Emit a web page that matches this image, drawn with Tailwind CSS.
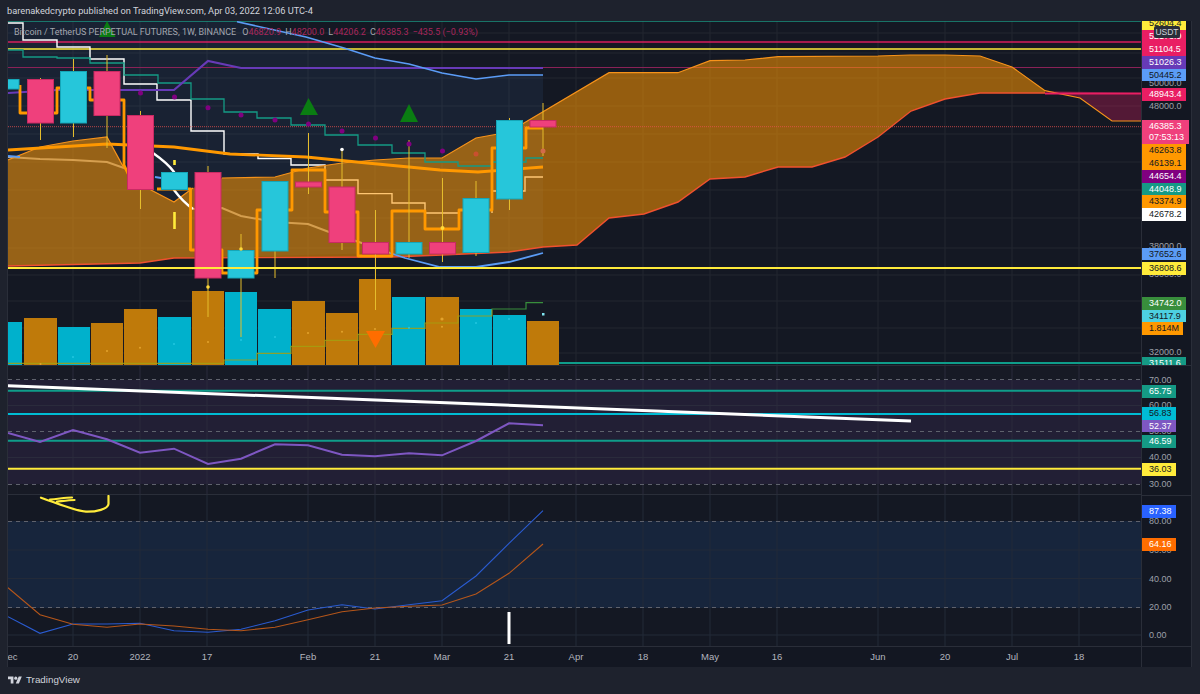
<!DOCTYPE html>
<html lang="en">
<head>
    <meta charset="UTF-8">
    <title>BTCUSDT | TradingView</title>
    <script src="https://cdn.jsdelivr.net/npm/@tailwindcss/browser@4"></script>
</head>
<body class="w-[1200px] h-[694px] bg-[#1e222d] overflow-hidden flex flex-col font-['Liberation_Sans',Arial,sans-serif]">
    <!-- Published by line -->
    <div class="h-[21px] pl-[7px] flex items-center text-[#d1d4dc] text-[9.25px] shrink-0 font-['Roboto',sans-serif]">barenakedcrypto published on TradingView.com, Apr 03, 2022 12:06 UTC-4</div>

    <div class="flex ml-[7px] w-[1185px] h-[646px] shrink-0 bg-[#131722]">
        <!-- Panes -->
        <div class="w-[1134px] flex flex-col border-l border-[#2a2e39]">
            <!-- Price pane -->
            <div class="relative h-[344px] overflow-hidden">
                <svg class="block" width="1133" height="344" viewBox="8 21 1133 344" fill="none">
                    <rect x="8" y="21" width="1133" height="344" fill="#141823"/>
                    <path d="M73 21V365M140 21V365M207 21V365M308 21V365M375 21V365M442 21V365M509 21V365M576 21V365M643 21V365M710 21V365M777 21V365M878 21V365M945 21V365M1012 21V365M1079 21V365M8 33H1141M8 53H1141M8 78H1141M8 106H1141M8 134H1141M8 162H1141M8 190H1141M8 218H1141M8 248H1141M8 275H1141M8 301H1141M8 328H1141M8 353H1141" stroke="#222631"/>
                    <!-- band between the blue lines -->
                    <polygon points="8,21 237,21 306,37 344,48 375,58 409,64 442,73 476,79 509,75 543,75 543,253 509,262 476,267 440,267 405,258 390,253 174,258 140,263 8,266" fill="#5b9cf6" fill-opacity="0.08"/>

                    <!-- volume -->
                    <g fill="#bf7a0a">
                        <rect x="24" y="318" width="33" height="47"/><rect x="91" y="323" width="32" height="42"/><rect x="124" y="309" width="33" height="56"/>
                        <rect x="192" y="291" width="32" height="74"/><rect x="292" y="301" width="33" height="64"/><rect x="326" y="313" width="32" height="52"/>
                        <rect x="359" y="279" width="32" height="86"/><rect x="426" y="297" width="33" height="68"/><rect x="527" y="321" width="32" height="44"/>
                    </g>
                    <g fill="#00b1cc">
                        <rect x="8" y="322" width="14" height="43"/><rect x="58" y="327" width="32" height="38"/><rect x="158" y="317" width="33" height="48"/>
                        <rect x="225" y="292" width="32" height="73"/><rect x="258" y="309" width="33" height="56"/><rect x="392" y="297" width="33" height="68"/>
                        <rect x="460" y="309" width="32" height="56"/><rect x="493" y="315" width="33" height="50"/>
                    </g>
                    <path d="M8 363.3H224V360H257V353.3H291V346.3H325V340.3H358V334.3H392V328.3H425V323H458V316H492V309.3" stroke="#a3a012" stroke-opacity="0.85" stroke-width="1.2"/>
                    <path d="M492 309.3V309H526V302.7H543" stroke="#388e3c" stroke-width="1.2"/>
                    <path d="M559 363H1141" stroke="#0f9d8a" stroke-width="2"/>
                    <g fill="#e3a32c">
                        <circle cx="40.5" cy="364" r="1"/><circle cx="107" cy="351" r="1"/><circle cx="140" cy="347.7" r="1"/><circle cx="208" cy="342" r="1"/><circle cx="308" cy="333" r="1"/><circle cx="342" cy="331.7" r="1"/><circle cx="375" cy="329" r="1"/><circle cx="442" cy="319" r="1.6"/><circle cx="442" cy="326.7" r="1"/>
                    </g>
                    <g fill="#22c7e0">
                        <circle cx="73" cy="357" r="1"/><circle cx="174" cy="344" r="1"/><circle cx="241" cy="340" r="1"/><circle cx="275" cy="337" r="1"/><circle cx="409" cy="327.7" r="1"/><circle cx="476" cy="323" r="1"/><circle cx="509" cy="319" r="1"/>
                    </g>
                    <rect x="542" y="313" width="2.5" height="2.5" fill="#7fe3f0"/>
                    <rect x="306.5" y="365" width="3" height="3" fill="#fff"/>

                    <!-- horizontal levels -->
                    <path d="M8 21.5H1141" stroke="#1a9a85" stroke-opacity="0.7"/>
                    <path d="M8 42H1141" stroke="#e91e63" stroke-opacity="0.9" stroke-width="1.3"/>
                    <path d="M8 49H1141" stroke="#ffeb3b" stroke-width="1.5"/>
                    <path d="M8 67.5H1141" stroke="#8a2257" stroke-width="1"/>

                    <!-- step lines under the cloud -->
                    <path d="M8 23H23V40H57V47H90V59H124V84H157V100H191V131H224V154H258V158.5H291V165H325V180H358V193.6H392V203H425V213H459M492 213V191H525V177H543" stroke="#fff" stroke-width="1.4"/>
                    <path d="M8 157L40 159L73 160L107 162L124 168" stroke="#fff" stroke-width="2" stroke-opacity="0.6"/>
                    <path d="M193 209L222 208L241 216L275 222L308 224L329 232L356 241L390 253" stroke="#fff" stroke-width="2" stroke-opacity="0.6"/>

                    <!-- ichimoku cloud -->
                    <polygon points="8,160 40,147 73,141 107,137 124,168 151,190 174,202 193,188 222,178 275,177 308,168 342,163 375,160 409,158 442,158 476,138 509,132 524,123 609,72.7 678,72.7 710,60.7 745,60 778,56.7 878,56 910,55 945,55 980,56 1012,67 1045,90.7 1045,93 980,93 945,99 911,111 878,137 845,157 812,167 778,167 745,177 710,179 678,202 644,214 609,218 577,245 543,247 509,252 442,255 392,257 174,258 140,263 8,266" fill="#ff9800" fill-opacity="0.55"/>
                    <polygon points="1045,91 1080,98 1112,121 1141,121 1141,93" fill="#e91e63" fill-opacity="0.3"/>
                    <path d="M8 160L40 147L73 141L107 137L124 168L151 190L174 202L193 188M222 178L275 177L308 168L342 163L375 160L409 158L442 158L476 138L509 132L524 123L609 72.7L678 72.7L710 60.7L745 60L778 56.7L878 56L910 55L945 55L980 56L1012 67L1045 90.7L1080 98L1112 121L1141 121" stroke="#f7931a" stroke-width="1.2"/>
                    <path d="M8 266L140 263L174 258L392 257L442 255L509 252L543 247L577 245L609 218L644 214L678 202L710 179L745 177L778 167L812 167L845 157L878 137L911 111L945 99L980 93L1045 93" stroke="#f0512f" stroke-width="1.4"/>
                    <path d="M1045 93.5H1141" stroke="#e91e63" stroke-width="1.8"/>

                    <!-- price line -->
                    <path d="M8 126.7H1141" stroke="#ef5350" stroke-opacity="0.75" stroke-dasharray="1 1"/>

                    <!-- teal, purple and blue lines -->
                    <path d="M8 50H23V57H57V58H90V63H124V75H158V83H191V99H224V112H257V118H291V125H325V135H358V145H392V153H425V162H458V166H492V162H526V158H543" stroke="#159a85" stroke-width="1.3"/>
                    <path d="M8 93L57 90L174 90L208 61L241 68L543 68" stroke="#673ab7" stroke-width="2.2"/>
                    <path d="M237 21.7L306 37L344 48L375 58L409 64L442 73L476 79L509 75L543 75" stroke="#5b9cf6" stroke-width="1.6"/>
                    <path d="M8 156L20 157M155 177L161 178M390 253L405 258L440 267L476 267L509 262L543 253" stroke="#5b9cf6" stroke-width="1.8"/>
                    <path d="M153 153C163 160 169 165 174 172V190C180 198 186 204 193 209" stroke="#fff" stroke-width="2.4"/>

                    <!-- thick orange lines -->
                    <path d="M8 150L107 144L174 147L230 154L306 157L367 163L440 170L478 172L543 167" stroke="#ff9800" stroke-width="2.8"/>
                    <path d="M20 85V113H57V88H90V100H124V165L130 178M157 189H190.5V250H222V273H257V210H292V170H325V212H358V256H392V211H425V229H459V210H492V148H526V128H543" stroke="#ff9800" stroke-width="2.8" stroke-linejoin="round"/>

                    <!-- wicks -->
                    <path d="M40.5 78V140M73.5 59V137M107 55V148M140.5 111V209M208 166V317M241 234V337M275 181V278M308.5 133V194M342 149V250M375.5 210V310M409 140V258M442.5 178V262M476 181V256M509.5 118V210M543 103V156" stroke="#e5bd2c" stroke-width="1"/>
                    <path d="M174.5 160V165M174.5 212V229" stroke="#ffeb3b" stroke-width="2.6"/>
                    <!-- candles -->
                    <g fill="#ef407c" stroke="#c92a63">
                        <rect x="27.5" y="79.5" width="26" height="43.5"/><rect x="94" y="71.5" width="26" height="44"/><rect x="127.5" y="115.5" width="26" height="74"/>
                        <rect x="195" y="172.5" width="26" height="105.5"/><rect x="295.5" y="182" width="26" height="5"/><rect x="329" y="187" width="26" height="55.5"/>
                        <rect x="362.5" y="242.5" width="26" height="11.5"/><rect x="429.5" y="242.5" width="26" height="11.5"/><rect x="530" y="120.5" width="26" height="6.5"/>
                    </g>
                    <g fill="#26c6da" stroke="#15a6b8">
                        <rect x="7" y="79.5" width="12" height="9.5"/><rect x="60.5" y="71.5" width="26" height="51.5"/><rect x="161.5" y="172.5" width="26" height="17"/>
                        <rect x="228" y="250.5" width="26" height="27.5"/><rect x="262" y="181.5" width="26" height="69.5"/><rect x="396" y="242.5" width="26" height="11.5"/>
                        <rect x="463" y="198.5" width="26" height="54"/><rect x="496.5" y="120.5" width="26" height="78.5"/>
                    </g>

                    <!-- dots and markers -->
                    <g fill="#800080">
                        <circle cx="140.5" cy="93" r="2.5"/><circle cx="174.5" cy="97" r="2.5"/><circle cx="208" cy="107.7" r="2.5"/><circle cx="241" cy="115" r="2.5"/><circle cx="275" cy="120" r="2.5"/><circle cx="308.5" cy="124" r="2.5"/><circle cx="342" cy="131" r="2.5"/><circle cx="375.5" cy="138" r="2.5"/><circle cx="409" cy="144" r="2.5"/><circle cx="442.5" cy="151" r="2.5"/>
                    </g>
                    <circle cx="476" cy="154" r="2.5" fill="#c9502f"/>
                    <circle cx="543" cy="151" r="2.5" fill="#d36a4a"/>
                    <circle cx="342" cy="149.5" r="1.8" fill="#fff"/>
                    <circle cx="208" cy="287" r="1.8" fill="#ffd93b"/>
                    <circle cx="241" cy="249" r="1.8" fill="#ffd93b"/>
                    <circle cx="442.5" cy="228" r="2" fill="#ffd93b"/>
                    <g fill="#0a7d12">
                        <polygon points="107,21 115.5,37 99,37"/><polygon points="308.5,98 318,115 300,115"/><polygon points="409,104 418,122 400,122"/>
                    </g>
                    <polygon points="366,331 385,331 375.5,348" fill="#ff6d00"/>

                    <!-- yellow support -->
                    <path d="M8 268H1141" stroke="#ffeb3b" stroke-width="2"/>
                </svg>
                <!-- Legend -->
                <div class="absolute left-[6px] top-[6px] flex gap-[6px] text-[9px] whitespace-nowrap leading-[11px] text-[#a3a6af] font-['Roboto',sans-serif]">
                    <span>Bitcoin / TetherUS PERPETUAL FUTURES, 1W, BINANCE</span>
                    <span class="flex gap-[4px] text-[#a8265c]">
                        <span><span class="text-[#a3a6af]">O</span>46820.9</span>
                        <span><span class="text-[#a3a6af]">H</span>48200.0</span>
                        <span><span class="text-[#a3a6af]">L</span>44206.2</span>
                        <span><span class="text-[#a3a6af]">C</span>46385.3</span>
                        <span>−435.5 (−0.93%)</span>
                    </span>
                </div>
            </div>

            <!-- RSI pane -->
            <div class="h-[130px]">
                <svg class="block" width="1133" height="130" viewBox="8 365 1133 130" fill="none">
                    <rect x="8" y="365" width="1133" height="130" fill="#171a25"/>
                    <rect x="8" y="380" width="1133" height="104" fill="#221f35"/>
                    <path d="M73 365V495M140 365V495M207 365V495M308 365V495M375 365V495M442 365V495M509 365V495M576 365V495M643 365V495M710 365V495M777 365V495M878 365V495M945 365V495M1012 365V495M1079 365V495M8 405.5H1141M8 457.5H1141" stroke="#2a2b3c"/>
                    <path d="M8 365.5H1141M8 494.5H1141" stroke="#2a2e39"/>
                    <path d="M8 379.5H1141M8 431.5H1141M8 484.5H1141" stroke="#5f626d" stroke-dasharray="4 4"/>
                    <path d="M8 390.7H1141M8 440.7H1141" stroke="#0f9d8a" stroke-width="2"/>
                    <path d="M8 414H1141" stroke="#00bcd4" stroke-width="2"/>
                    <path d="M8 468.7H1141" stroke="#ffeb3b" stroke-width="2"/>
                    <path d="M8 385.7L911 421" stroke="#fff" stroke-width="3"/>
                    <polyline points="8,433 40,442 73,430 107,439.3 140,452.7 174,448.7 208,464 241,458.7 275,444.3 308,445.3 342,454.7 375,456.3 409,453.3 442,455.3 476,441 509,423.3 543,425.3" stroke="#7e57c2" stroke-width="2"/>
                </svg>
            </div>

            <!-- Stochastic pane -->
            <div class="h-[151px]">
                <svg class="block" width="1133" height="151" viewBox="8 495 1133 151" fill="none">
                    <rect x="8" y="495" width="1133" height="151" fill="#141823"/>
                    <rect x="8" y="521" width="1133" height="87" fill="#17253c"/>
                    <path d="M73 495V646M140 495V646M207 495V646M308 495V646M375 495V646M442 495V646M509 495V646M576 495V646M643 495V646M710 495V646M777 495V646M878 495V646M945 495V646M1012 495V646M1079 495V646M8 550H1141M8 578.5H1141M8 635H1141" stroke="#232a38"/>
                    <path d="M8 521.5H1141M8 607.5H1141" stroke="#5f626d" stroke-dasharray="4 4"/>
                    <!-- hand drawn arrow -->
                    <path d="M108.5 496V504C108 509 96 512 86 511.7C76 511 62 505 41 497.7M50 499.5C58 499 65 497.5 72 497.5M57 501.7C63 501 69 500 74.5 500" stroke="#ffeb3b" stroke-width="2.2" stroke-linecap="round" stroke-linejoin="round"/>
                    <polyline points="8,616.7 40,633.3 73,624 107,624 140,623.3 174,630.7 208,632.3 241,629.3 275,620.7 308,610 342,604.7 375,609 409,604.7 442,600.7 476,576 509,543.3 543,510.7" stroke="#2a5bd0" stroke-width="1.1"/>
                    <polyline points="8,587.7 40,614.7 73,624.3 107,627.3 140,624 174,626 208,629.3 241,630.7 275,627.3 308,619.7 342,611.7 375,608 409,606.3 442,605 476,594 509,573.3 543,544" stroke="#b5561a" stroke-width="1.1"/>
                    <rect x="507.5" y="612" width="3" height="32" fill="#fff"/>
                </svg>
            </div>

            <!-- Time axis -->
            <div class="relative h-[21px] border-t border-[#2a2e39] text-[9.5px] text-[#b2b5be] leading-[20px] overflow-hidden">
                <span class="absolute left-[1px] -translate-x-1/2">Dec</span>
                <span class="absolute left-[65px] -translate-x-1/2">20</span>
                <span class="absolute left-[132px] -translate-x-1/2">2022</span>
                <span class="absolute left-[199px] -translate-x-1/2">17</span>
                <span class="absolute left-[300px] -translate-x-1/2">Feb</span>
                <span class="absolute left-[367px] -translate-x-1/2">21</span>
                <span class="absolute left-[434px] -translate-x-1/2">Mar</span>
                <span class="absolute left-[501px] -translate-x-1/2">21</span>
                <span class="absolute left-[568px] -translate-x-1/2">Apr</span>
                <span class="absolute left-[635px] -translate-x-1/2">18</span>
                <span class="absolute left-[702px] -translate-x-1/2">May</span>
                <span class="absolute left-[769px] -translate-x-1/2">16</span>
                <span class="absolute left-[870px] -translate-x-1/2">Jun</span>
                <span class="absolute left-[937px] -translate-x-1/2">20</span>
                <span class="absolute left-[1004px] -translate-x-1/2">Jul</span>
                <span class="absolute left-[1071px] -translate-x-1/2">18</span>
            </div>
        </div>

        <!-- Price axis -->
        <div class="w-[51px] flex flex-col border-l border-r border-[#2a2e39] text-[9px] leading-[13px] text-[#9da0a9]">
            <div class="relative h-[344px] overflow-hidden">
                <span class="absolute left-[7px] top-[56px]">50000.0</span>
                <span class="absolute left-[7px] top-[79px]">48000.0</span>
                <span class="absolute left-0 top-[-4px] w-[44px] h-[13px] pl-[7px] bg-[#ffeb3b] text-[#131722]">52604.4</span>
                <span class="absolute left-0 top-[9px] w-[44px] h-[13px] pl-[7px] bg-[#e91e63] text-white">52173.9</span>
                <span class="absolute left-0 top-[22px] w-[44px] h-[13px] pl-[7px] bg-[#e91e63] text-white">51104.5</span>
                <span class="absolute left-0 top-[35px] w-[44px] h-[13px] pl-[7px] bg-[#673ab7] text-white">51026.3</span>
                <span class="absolute left-0 top-[48px] w-[44px] h-[12px] pl-[7px] bg-[#5b9cf6] text-[#131722]">50445.2</span>
                <span class="absolute left-0 top-[67px] w-[44px] h-[13px] pl-[7px] bg-[#e91e63] text-white">48943.4</span>
                <span class="absolute left-0 top-[99px] w-[47px] h-[24px] pl-[7px] pt-[1px] leading-[11px] bg-[#ef407c] text-white">46385.3<br>07:53:13</span>
                <span class="absolute left-0 top-[123px] w-[44px] h-[13px] pl-[7px] bg-[#ff9800] text-[#131722]">46263.8</span>
                <span class="absolute left-0 top-[136px] w-[44px] h-[13px] pl-[7px] bg-[#ff9800] text-[#131722]">46139.1</span>
                <span class="absolute left-0 top-[149px] w-[44px] h-[13px] pl-[7px] bg-[#800080] text-white">44654.4</span>
                <span class="absolute left-0 top-[162px] w-[44px] h-[12px] pl-[7px] bg-[#159a85] text-white">44048.9</span>
                <span class="absolute left-0 top-[174px] w-[44px] h-[13px] pl-[7px] bg-[#ff9800] text-[#131722]">43374.9</span>
                <span class="absolute left-0 top-[187px] w-[44px] h-[13px] pl-[7px] bg-white text-[#131722]">42678.2</span>
                <span class="absolute left-[7px] top-[219px]">38000.0</span>
                <span class="absolute left-0 top-[227px] w-[44px] h-[12px] pl-[7px] bg-[#5b9cf6] text-[#131722]">37652.6</span>
                <span class="absolute left-[7px] top-[247px]">36000.0</span>
                <span class="absolute left-0 top-[241px] w-[44px] h-[13px] pl-[7px] bg-[#ffeb3b] text-[#131722]">36808.6</span>
                <span class="absolute left-0 top-[276px] w-[44px] h-[13px] pl-[7px] bg-[#388e3c] text-white">34742.0</span>
                <span class="absolute left-0 top-[289px] w-[44px] h-[12px] pl-[7px] bg-[#4dd0e1] text-[#131722]">34117.9</span>
                <span class="absolute left-0 top-[301px] w-[41px] h-[13px] pl-[7px] bg-[#ff9800] text-[#131722]">1.814M</span>
                <span class="absolute left-[7px] top-[325px]">32000.0</span>
                <span class="absolute left-0 top-[336px] w-[44px] h-[13px] pl-[7px] bg-[#159a85] text-white">31511.6</span>
                <!-- currency tag -->
                <span class="absolute left-[12px] top-[5px] w-[26px] h-[12px] rounded-[2px] bg-[#2a2e39] text-[#d1d4dc] text-[8.5px] leading-[12px] text-center">USDT</span>
            </div>
            <div class="relative h-[130px] border-t border-[#2a2e39] overflow-hidden">
                <span class="absolute left-[7px] top-[8px]">70.00</span>
                <span class="absolute left-0 top-[19px] w-[34px] h-[13px] pl-[7px] bg-[#159a85] text-white">65.75</span>
                <span class="absolute left-[7px] top-[33px]">60.00</span>
                <span class="absolute left-0 top-[41px] w-[34px] h-[13px] pl-[7px] bg-[#00bcd4] text-[#131722]">56.83</span>
                <span class="absolute left-[7px] top-[59px]">50.00</span>
                <span class="absolute left-0 top-[54px] w-[34px] h-[12px] pl-[7px] bg-[#7e57c2] text-white">52.37</span>
                <span class="absolute left-0 top-[69px] w-[34px] h-[13px] pl-[7px] bg-[#159a85] text-white">46.59</span>
                <span class="absolute left-[7px] top-[85px]">40.00</span>
                <span class="absolute left-0 top-[97px] w-[34px] h-[13px] pl-[7px] bg-[#ffeb3b] text-[#131722]">36.03</span>
                <span class="absolute left-[7px] top-[112px]">30.00</span>
            </div>
            <div class="relative h-[151px] border-t border-[#2a2e39] overflow-hidden">
                <span class="absolute left-[7px] top-[19px]">80.00</span>
                <span class="absolute left-0 top-[9px] w-[34px] h-[13px] pl-[7px] bg-[#2962ff] text-white">87.38</span>
                <span class="absolute left-[7px] top-[48px]">60.00</span>
                <span class="absolute left-0 top-[42px] w-[34px] h-[13px] pl-[7px] bg-[#ff6d00] text-white">64.16</span>
                <span class="absolute left-[7px] top-[77px]">40.00</span>
                <span class="absolute left-[7px] top-[105px]">20.00</span>
                <span class="absolute left-[7px] top-[133px]">0.00</span>
            </div>
            <div class="h-[21px] border-t border-[#2a2e39]"></div>
        </div>
    </div>

    <!-- Footer -->
    <div class="h-[27px] pl-[8px] flex items-center gap-[4px] text-[#d1d4dc] text-[9.8px] shrink-0">
        <svg width="14" height="11" viewBox="0 0 36 28" fill="#d1d4dc"><path d="M14 22H7V11H0V4h14v18zM28 22h-8l7.5-18h8L28 22z"/><circle cx="20" cy="8" r="4"/></svg>
        <span>TradingView</span>
    </div>
</body>
</html>
